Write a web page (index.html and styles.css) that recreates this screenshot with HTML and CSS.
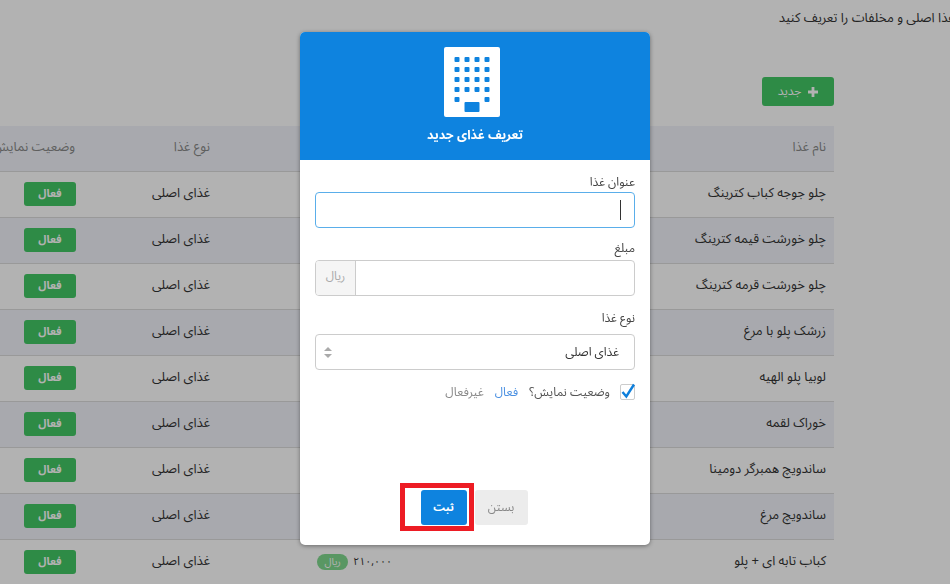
FILE: index.html
```html
<!DOCTYPE html>
<html lang="fa" dir="rtl">
<head>
    <meta charset="UTF-8">
    <meta name="viewport" content="width=device-width, initial-scale=1.0">
    <title>تعریف غذا</title>
    <link rel="stylesheet" href="styles.css">
</head>
<body>
    <div class="page">
        <p class="intro">در این بخش می توانید غذا اصلی و مخلفات را تعریف کنید</p>
        <div class="toolbar">
            <button class="btnNew">
                <svg class="plus" viewBox="0 0 10 10"><path d="M3.6 0h2.8v3.6H10v2.8H6.4V10H3.6V6.4H0V3.6h3.6z"/></svg>
                جدید
            </button>
        </div>
        <table class="list">
            <thead>
                <tr><th class="colName">نام غذا</th><th class="colPrice">مبلغ</th><th class="colType">نوع غذا</th><th class="colStatus">وضعیت نمایش</th></tr>
            </thead>
            <tbody>
                <tr><td>چلو جوجه کباب کترینگ</td><td><span class="amount">۲۱۰,۰۰۰</span><span class="unit">ریال</span></td><td>غذای اصلی</td><td class="statusCell"><span class="badge">فعال</span></td></tr>
                <tr><td>چلو خورشت قیمه کترینگ</td><td><span class="amount">۲۱۰,۰۰۰</span><span class="unit">ریال</span></td><td>غذای اصلی</td><td class="statusCell"><span class="badge">فعال</span></td></tr>
                <tr><td>چلو خورشت قرمه کترینگ</td><td><span class="amount">۲۱۰,۰۰۰</span><span class="unit">ریال</span></td><td>غذای اصلی</td><td class="statusCell"><span class="badge">فعال</span></td></tr>
                <tr><td>زرشک پلو با مرغ</td><td><span class="amount">۲۱۰,۰۰۰</span><span class="unit">ریال</span></td><td>غذای اصلی</td><td class="statusCell"><span class="badge">فعال</span></td></tr>
                <tr><td>لوبیا پلو الهیه</td><td><span class="amount">۲۱۰,۰۰۰</span><span class="unit">ریال</span></td><td>غذای اصلی</td><td class="statusCell"><span class="badge">فعال</span></td></tr>
                <tr><td>خوراک لقمه</td><td><span class="amount">۲۱۰,۰۰۰</span><span class="unit">ریال</span></td><td>غذای اصلی</td><td class="statusCell"><span class="badge">فعال</span></td></tr>
                <tr><td>ساندویچ همبرگر دومینا</td><td><span class="amount">۲۱۰,۰۰۰</span><span class="unit">ریال</span></td><td>غذای اصلی</td><td class="statusCell"><span class="badge">فعال</span></td></tr>
                <tr><td>ساندویچ مرغ</td><td><span class="amount">۲۱۰,۰۰۰</span><span class="unit">ریال</span></td><td>غذای اصلی</td><td class="statusCell"><span class="badge">فعال</span></td></tr>
                <tr><td>کباب تابه ای + پلو</td><td><span class="amount">۲۱۰,۰۰۰</span><span class="unit">ریال</span></td><td>غذای اصلی</td><td class="statusCell"><span class="badge">فعال</span></td></tr>
            </tbody>
        </table>
    </div>

    <div class="overlay"></div>

    <div class="modal">
        <div class="modalHead">
            <svg class="building" viewBox="0 0 56 70">
                <rect width="56" height="70" rx="2" fill="#fff"/>
                <g fill="#0e83df">
                    <rect x="10.500" y="10" width="5" height="5" rx="1"/><rect x="20.500" y="10" width="5" height="5" rx="1"/><rect x="30.500" y="10" width="5" height="5" rx="1"/><rect x="40.500" y="10" width="5" height="5" rx="1"/>
                    <rect x="10.500" y="20" width="5" height="5" rx="1"/><rect x="20.500" y="20" width="5" height="5" rx="1"/><rect x="30.500" y="20" width="5" height="5" rx="1"/><rect x="40.500" y="20" width="5" height="5" rx="1"/>
                    <rect x="10.500" y="30" width="5" height="5" rx="1"/><rect x="20.500" y="30" width="5" height="5" rx="1"/><rect x="30.500" y="30" width="5" height="5" rx="1"/><rect x="40.500" y="30" width="5" height="5" rx="1"/>
                    <rect x="10.500" y="40" width="5" height="5" rx="1"/><rect x="20.500" y="40" width="5" height="5" rx="1"/><rect x="30.500" y="40" width="5" height="5" rx="1"/><rect x="40.500" y="40" width="5" height="5" rx="1"/>
                    <rect x="10.500" y="50" width="5" height="5" rx="1"/><rect x="40.500" y="50" width="5" height="5" rx="1"/>
                    <rect x="20.500" y="55" width="15" height="10" rx="1"/>
                </g>
            </svg>
            <h4 class="modalTitle">تعریف غذای جدید</h4>
        </div>
        <div class="modalBody">
            <label class="fieldLabel">عنوان غذا</label>
            <div class="field focused"><span class="caret"></span></div>

            <label class="fieldLabel priceLabel">مبلغ</label>
            <div class="field priceField">
                <span class="fill"></span>
                <span class="addon">ریال</span>
            </div>

            <label class="fieldLabel typeLabel">نوع غذا</label>
            <div class="field selectField">
                <span>غذای اصلی</span>
                <svg class="sort" viewBox="0 0 8 11"><path d="M4 0l4 4H0zM4 11L0 7h8z"/></svg>
            </div>

            <div class="statusRow">
                <span class="checkBox">
                    <svg viewBox="0 0 16 18"><path d="M2.500 10l3.800 4.500L14 2.500" fill="none" stroke="#0e7fdc" stroke-width="2.400"/></svg>
                </span>
                <span class="statusLabel">وضعیت نمایش؟</span>
                <span class="on">فعال</span>
                <span class="off">غیرفعال</span>
            </div>
        </div>
        <div class="modalFoot">
            <button class="btnClose">بستن</button>
            <div class="saveWrap">
                <button class="btnSave">ثبت</button>
                <span class="marker"></span>
            </div>
        </div>
    </div>
</body>
</html>
```

FILE: styles.css
```css
* {
    box-sizing: border-box;
}
html, body {
    height: 100%;
}
body {
    margin: 0;
    overflow: hidden;
    background-color: #fff;
    color: #333;
    font-family: "Noto Sans Arabic", "DejaVu Sans", sans-serif;
    font-size: 12px;
}
.page {
    padding-right: 116px;
}
.intro {
    height: 77px;
    margin: 0 -238px 0 0;
    padding-top: 4px;
    font-size: 13px;
    white-space: nowrap;
}
.toolbar {
    height: 49px;
}
.btnNew {
    display: flex;
    align-items: center;
    justify-content: center;
    gap: 7px;
    width: 72px;
    height: 29px;
    border: 0;
    border-radius: 3px;
    background-color: #43c765;
    color: #fff;
    font: inherit;
}
.plus {
    width: 10px;
    height: 10px;
    fill: #fff;
}
.list {
    width: 851px;
    table-layout: fixed;
    border-collapse: collapse;
    font-size: 13px;
}
.colName { width: 434px; }
.colPrice { width: 182px; }
.colType { width: 135px; }
.colStatus { width: 100px; }
th {
    height: 45px;
    padding: 0 8px 2px;
    background-color: #f1f3fa;
    color: #888;
    font-weight: normal;
    text-align: right;
    white-space: nowrap;
    overflow: hidden;
}
td {
    height: 46px;
    padding: 0 8px 2px;
    border-top: 1px solid #dcdcdc;
}
tbody tr:nth-child(even) td {
    background-color: #f1f3fa;
}
.statusCell {
    padding-right: 7px;
}
.badge {
    display: block;
    width: 52px;
    height: 24px;
    margin-top: 2px;
    line-height: 23px;
    border-radius: 3px;
    background-color: #43c765;
    color: #fff;
    font-size: 11px;
    font-weight: bold;
    text-align: center;
}
.amount {
    font-size: 10.500px;
}
.unit {
    display: inline-block;
    width: 31px;
    height: 16px;
    margin-right: 5px;
    line-height: 15px;
    border-radius: 8px;
    background-color: #80d88f;
    color: #fff;
    font-size: 10px;
    text-align: center;
}
.overlay {
    position: fixed;
    inset: 0;
    background-color: rgba(0, 0, 0, .3);
}
.modal {
    position: absolute;
    top: 32px;
    left: 300px;
    width: 350px;
    height: 513px;
    display: flex;
    flex-direction: column;
    background-color: #fff;
    border-radius: 5px;
    box-shadow: 0 1px 4px rgba(0, 0, 0, .4);
    overflow: hidden;
}
.modalHead {
    height: 128px;
    padding-top: 15px;
    background-color: #0e83df;
    text-align: center;
}
.building {
    display: block;
    width: 56px;
    height: 70px;
    margin: 0 auto;
    transform: translateX(-3px);
}
.modalTitle {
    margin: 5px 0 0;
    color: #fff;
    font-size: 12.500px;
    font-weight: bold;
}
.modalBody {
    flex: 1;
    padding: 15px 15px 0;
}
.fieldLabel {
    display: block;
    height: 17px;
    line-height: 15px;
    color: #444;
}
.priceLabel {
    line-height: 11px;
}
.field {
    position: relative;
    height: 36px;
    margin-bottom: 15px;
    border: 1px solid #ccc;
    border-radius: 4px;
    display: flex;
    align-items: center;
}
.focused {
    border-color: #5aaeea;
}
.caret {
    position: absolute;
    top: 7px;
    right: 13px;
    width: 1px;
    height: 20px;
    background-color: #333;
}
.priceField {
    overflow: hidden;
}
.fill {
    flex: 1;
}
.addon {
    width: 40px;
    height: 100%;
    line-height: 32px;
    border-right: 1px solid #ccc;
    background-color: #f5f5f5;
    color: #aaa;
    text-align: center;
}
.typeLabel {
    height: 23px;
}
.selectField {
    justify-content: space-between;
    margin-bottom: 14px;
    padding: 0 15px 0 8px;
}
.sort {
    width: 8px;
    height: 11px;
    fill: #aaa;
}
.statusRow {
    display: flex;
    align-items: center;
    height: 16px;
    color: #555;
}
.checkBox {
    position: relative;
    width: 15px;
    height: 16px;
    border: 1px solid #ccc;
    border-radius: 2px;
}
.checkBox svg {
    position: absolute;
    top: -3px;
    left: -1px;
    width: 16px;
    height: 18px;
}
.statusLabel {
    margin-right: 10px;
}
.on {
    margin-right: 11px;
    color: #4a90e2;
}
.off {
    margin-right: 11px;
    color: #888;
}
.modalFoot {
    display: flex;
    justify-content: center;
    gap: 8px;
    height: 55px;
    padding-right: 2px;
}
.saveWrap {
    position: relative;
}
.btnSave, .btnClose {
    height: 35px;
    border: 0;
    border-radius: 3px;
    font: inherit;
}
.btnSave {
    width: 46px;
    background-color: #0e83df;
    color: #fff;
    font-size: 11px;
    font-weight: bold;
}
.btnClose {
    width: 53px;
    background-color: #ececec;
    color: #888;
}
.marker {
    position: absolute;
    top: -7px;
    left: -21px;
    width: 74px;
    height: 48px;
    border: 5px solid #ed1c24;
}
```
